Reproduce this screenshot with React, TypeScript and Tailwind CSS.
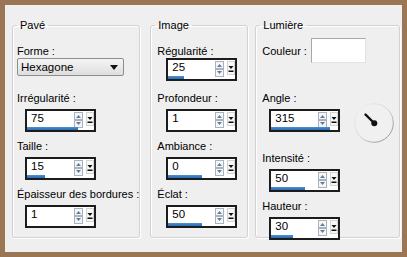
import React from "react";

const font = { fontFamily: '"Liberation Sans", Arial, sans-serif' };

function SpinButtons() {
  return (
    <svg width="9" height="16" viewBox="0 0 9 16" className="mt-[1px] mr-[3px] shrink-0">
      <rect x="0.5" y="0.5" width="8" height="7" fill="#f4f6f8" stroke="#a9b3bf" />
      <rect x="0.5" y="8.5" width="8" height="7" fill="#f4f6f8" stroke="#a9b3bf" />
      <path d="M2 6 L4.5 3 L7 6 Z" fill="#6a7c92" />
      <path d="M2 10 L4.5 13 L7 10 Z" fill="#6a7c92" />
    </svg>
  );
}

function DropButton() {
  return (
    <svg width="8" height="14" viewBox="0 0 8 14" className="mt-[1px] shrink-0">
      <rect x="0.5" y="0.5" width="7" height="13" fill="#f7f7f7" stroke="#d4d4d4" />
      <path d="M1.5 5 L6.5 5 L4 8 Z" fill="#111" />
      <rect x="1.5" y="9.5" width="5" height="1.5" fill="#111" />
    </svg>
  );
}

function Spin({ value, bar }: { value: string; bar: number }) {
  return (
    <div className="w-[71px] h-[23px] border-2 border-[#1c1c1c] bg-white flex flex-col">
      <div className="flex items-start h-[16px]">
        <span className="flex-1 pl-[4px] pt-[1px] text-[11.5px] leading-[13px] text-black">{value}</span>
        <SpinButtons />
        <DropButton />
      </div>
      <div className="h-[3px] flex">
        <div className="h-[3px] bg-gradient-to-b from-[#4f8fd6] to-[#2a6bb5]" style={{ width: bar }} />
      </div>
    </div>
  );
}

function Label({ children }: { children: React.ReactNode }) {
  return <div className="text-[11px] leading-[13px] text-black whitespace-nowrap">{children}</div>;
}

function Group({ title, width, children }: { title: string; width: string; children: React.ReactNode }) {
  return (
    <fieldset
      className={`${width} h-[220px] border border-[#d2d2d2] rounded-[3px] shadow-[inset_1px_1px_0_#ffffff,1px_1px_0_#ffffff]`}
    >
      <legend className="ml-[4px] px-[3px] text-[11px] leading-[14px] text-black">{title}</legend>
      {children}
    </fieldset>
  );
}

function Dial() {
  return (
    <svg width="41" height="41" viewBox="0 0 41 41" className="shrink-0">
      <defs>
        <linearGradient id="ring" x1="0" y1="0" x2="1" y2="1">
          <stop offset="0" stopColor="#f4f4f4" />
          <stop offset="0.5" stopColor="#d4d4d4" />
          <stop offset="1" stopColor="#808080" />
        </linearGradient>
      </defs>
      <circle cx="20" cy="20" r="19.3" fill="#f0f0f0" stroke="url(#ring)" strokeWidth="1" />
      <line x1="20" y1="20" x2="11.5" y2="11.5" stroke="#111" strokeWidth="2.4" strokeLinecap="round" />
      <circle cx="20.3" cy="20.3" r="3" fill="#111" />
    </svg>
  );
}

export default function App() {
  return (
    <div style={font} className="w-[407px] h-[257px] border-[5px] border-[#9b7654] bg-[#efefef]">
      <div className="flex pl-[7px] pt-[13px]">
        <Group title="Pavé" width="w-[126px]">
          <div className="flex flex-col pl-[4px] pt-[13px]">
            <Label>Forme :</Label>
            <div className="w-[107px] h-[18px] border border-[#8e8e8e] rounded-[2px] bg-gradient-to-b from-[#f5f5f5] to-[#dedede] flex items-center">
              <span className="flex-1 pl-[3px] text-[11.5px] leading-[14px] text-black">Hexagone</span>
              <svg width="8" height="5" viewBox="0 0 8 5" className="mr-[5px]">
                <path d="M0 0 L8 0 L4 5 Z" fill="#111" />
              </svg>
            </div>
            <div className="mt-[16px]">
              <Label>Irrégularité :</Label>
            </div>
            <div className="mt-[4px] ml-[8px]">
              <Spin value="75" bar={51} />
            </div>
            <div className="mt-[8px]">
              <Label>Taille :</Label>
            </div>
            <div className="mt-[4px] ml-[8px]">
              <Spin value="15" bar={18} />
            </div>
            <div className="mt-[8px]">
              <Label>Épaisseur des bordures :</Label>
            </div>
            <div className="mt-[4px] ml-[8px]">
              <Spin value="1" bar={0} />
            </div>
          </div>
        </Group>
        <div className="w-[10px]" />
        <Group title="Image" width="w-[98px]">
          <div className="flex flex-col pl-[6px] pt-[13px]">
            <Label>Régularité :</Label>
            <div className="ml-[9px] mt-0">
              <Spin value="25" bar={16} />
            </div>
            <div className="mt-[11px]">
              <Label>Profondeur :</Label>
            </div>
            <div className="mt-[4px] ml-[9px]">
              <Spin value="1" bar={0} />
            </div>
            <div className="mt-[8px]">
              <Label>Ambiance :</Label>
            </div>
            <div className="mt-[4px] ml-[9px]">
              <Spin value="0" bar={34} />
            </div>
            <div className="mt-[8px]">
              <Label>Éclat :</Label>
            </div>
            <div className="mt-[4px] ml-[9px]">
              <Spin value="50" bar={34} />
            </div>
          </div>
        </Group>
        <div className="w-[7px]" />
        <Group title="Lumière" width="w-[145px]">
          <div className="flex flex-col pl-[6px] pt-[6px]">
            <div className="flex items-start">
              <div className="w-[49px] mt-[7px]">
                <Label>Couleur :</Label>
              </div>
              <div className="w-[55px] h-[25px] bg-white border border-[#a8a8a8] border-r-[#e2e2e2] border-b-[#e2e2e2]" />
            </div>
            <div className="flex items-start mt-[29px]">
              <div className="flex flex-col">
                <Label>Angle :</Label>
                <div className="mt-[4px] ml-[7px]">
                  <Spin value="315" bar={59} />
                </div>
              </div>
              <div className="ml-[14px] mt-[11px]">
                <Dial />
              </div>
            </div>
            <div className="mt-[8px]">
              <Label>Intensité :</Label>
            </div>
            <div className="mt-[4px] ml-[7px]">
              <Spin value="50" bar={34} />
            </div>
            <div className="mt-[8px]">
              <Label>Hauteur :</Label>
            </div>
            <div className="mt-[4px] ml-[7px]">
              <Spin value="30" bar={22} />
            </div>
          </div>
        </Group>
      </div>
    </div>
  );
}
